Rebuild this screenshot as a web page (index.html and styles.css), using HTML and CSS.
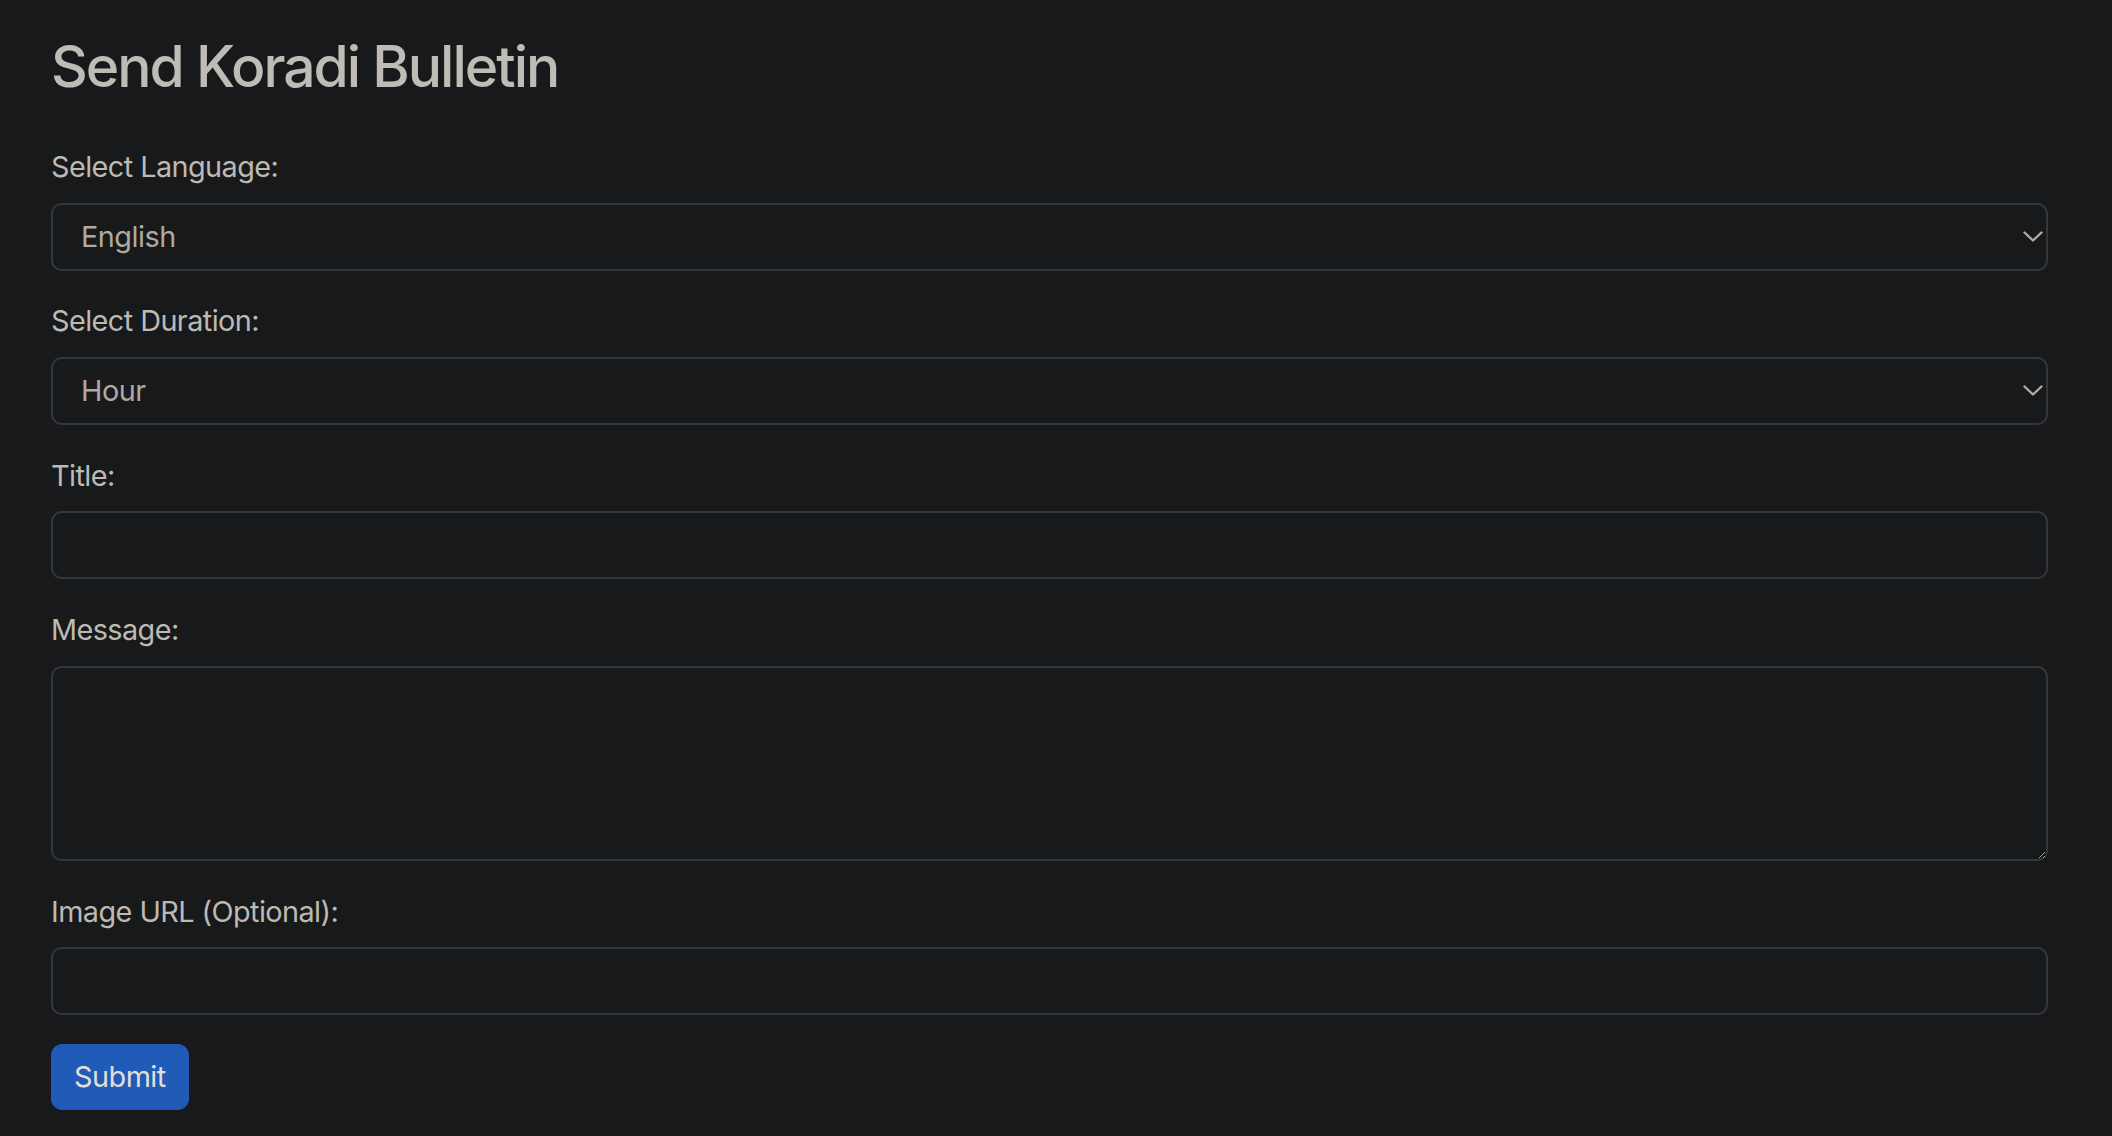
FILE: index.html
```html
<!DOCTYPE html>
<html lang="en">
<head>
<meta charset="utf-8">
<title>Send Koradi Bulletin</title>
<link rel="stylesheet" href="styles.css">
</head>
<body>
<main class="page">
  <h1 class="page-title">Send Koradi Bulletin</h1>
  <form class="bulletin-form">
    <div class="form-group">
      <label class="form-label" for="language">Select Language:</label>
      <div class="select-wrap">
        <select id="language" class="form-control form-select">
          <option>English</option>
        </select>
        <svg class="chevron" width="20" height="12" viewBox="0 0 20 12" aria-hidden="true"><path d="M1.5 1.5 L10 9.5 L18.5 1.5" fill="none" stroke="currentColor" stroke-width="2.4" stroke-linecap="round" stroke-linejoin="round"/></svg>
      </div>
    </div>
    <div class="form-group">
      <label class="form-label" for="duration">Select Duration:</label>
      <div class="select-wrap">
        <select id="duration" class="form-control form-select">
          <option>Hour</option>
        </select>
        <svg class="chevron" width="20" height="12" viewBox="0 0 20 12" aria-hidden="true"><path d="M1.5 1.5 L10 9.5 L18.5 1.5" fill="none" stroke="currentColor" stroke-width="2.4" stroke-linecap="round" stroke-linejoin="round"/></svg>
      </div>
    </div>
    <div class="form-group">
      <label class="form-label" for="title">Title:</label>
      <input id="title" class="form-control" type="text">
    </div>
    <div class="form-group">
      <label class="form-label" for="message">Message:</label>
      <textarea id="message" class="form-control form-textarea"></textarea>
    </div>
    <div class="form-group">
      <label class="form-label" for="image">Image URL (Optional):</label>
      <input id="image" class="form-control" type="text">
    </div>
    <button type="button" class="btn-submit">Submit</button>
  </form>
</main>
</body>
</html>
```
FILE: styles.css
```css
html, body {
  margin: 0;
  padding: 0;
  background: #18191b;
}

body {
  color-scheme: dark;
  font-family: Inter, "Noto Sans", "Liberation Sans", sans-serif;
  color: #bdb9b3;
  font-size: 28.8px;
  line-height: 43.2px;
  letter-spacing: -0.55px;
}

.page {
  padding: 31px 64px 20px 51px;
}

.page-title {
  margin: 0 0 42px 0;
  font-size: 57px;
  line-height: 72px;
  font-weight: 500;
  letter-spacing: -2px;
  color: #bfbbb5;
}

.form-group {
  margin-bottom: 28.8px;
}

.form-label {
  display: block;
  margin-bottom: 14.4px;
  font-weight: 400;
  color: #bdb9b3;
}

.form-control {
  display: block;
  width: 100%;
  box-sizing: border-box;
  height: 68px;
  margin: 0;
  padding: 0 28px;
  background: #18191b;
  border: 2px solid #34373a;
  border-radius: 10.8px;
  font-family: inherit;
  font-size: 28.8px;
  letter-spacing: -0.5px;
  color: #aeaaa3;
  outline: none;
}

.form-select {
  appearance: none;
  -webkit-appearance: none;
}

.select-wrap {
  position: relative;
}

.chevron {
  position: absolute;
  right: 5px;
  top: 50%;
  margin-top: -6px;
  color: #b1aca5;
}

.form-textarea {
  height: 195px;
  padding: 10px 28px;
  resize: vertical;
}

.btn-submit {
  display: block;
  height: 66px;
  padding: 0 22px;
  background: #215bb8;
  border: 1px solid #2159b3;
  border-radius: 10.8px;
  font-family: inherit;
  font-size: 28.8px;
  font-weight: 400;
  letter-spacing: -0.5px;
  color: #e2dfda;
  cursor: pointer;
}
```
